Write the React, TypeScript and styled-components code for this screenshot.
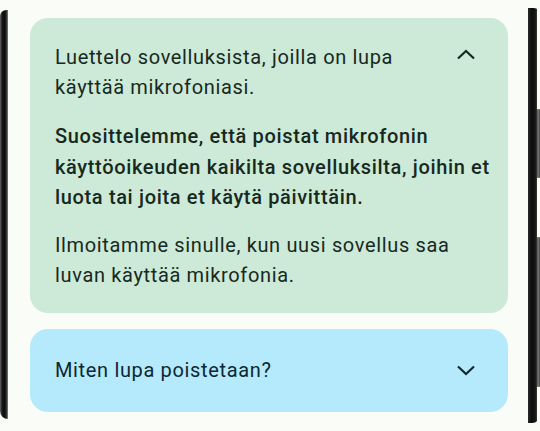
import styled, { createGlobalStyle } from 'styled-components';

const GlobalStyle = createGlobalStyle`
  html, body {
    margin: 0;
    padding: 0;
    background: #fafcf7;
  }
  body {
    font-family: Roboto, 'Noto Sans', 'Liberation Sans', sans-serif;
  }
`;

const Frame = styled.div`
  width: 540px;
  height: 431px;
  display: flex;
  overflow: hidden;
  background: #fafcf7;
`;

const LeftBezel = styled.div`
  width: 8px;
  margin: 10px 0 12px;
  border-radius: 8px 0 0 10px;
  background: linear-gradient(90deg, #6a6a6a 0%, #1a1a1a 25%, #0b0b0b 60%, #3c3c3c 85%, #8a8a8a 100%);
`;

const RightBezel = styled.div`
  width: 12px;
  margin: 8px 0 8px;
  display: flex;
  flex-direction: column;
  align-items: flex-end;
  border-radius: 0 6px 8px 0;
  background: linear-gradient(90deg, #2a2a2a 0%, #0c0c0c 30%, #151515 60%, #3a3a3a 75%, transparent 76%);
`;

const SideButton = styled.div<{ $top: number; $height: number }>`
  width: 3px;
  margin-top: ${(p) => p.$top}px;
  height: ${(p) => p.$height}px;
  border-radius: 1px;
  background: linear-gradient(90deg, #555 0%, #777 60%, #3a3a3a 100%);
`;

const Screen = styled.div`
  flex: 1;
  display: flex;
  flex-direction: column;
  gap: 16px;
  padding: 18px 20px 0 22px;
`;

const Card = styled.div<{ $tone: 'green' | 'blue' }>`
  border-radius: 18px;
  background: ${(p) => (p.$tone === 'green' ? '#cde9d7' : '#b5eafc')};
  color: ${(p) => (p.$tone === 'green' ? '#17291e' : '#0e2731')};
  padding: ${(p) => (p.$tone === 'green' ? '24px 8px 22px 25px' : '26px 8px 27px 25px')};
`;

const Header = styled.div<{ $open?: boolean }>`
  display: flex;
  align-items: ${(p) => (p.$open ? 'flex-start' : 'center')};
  justify-content: space-between;
  gap: 20px;
  padding-right: 18px;
`;

const Title = styled.div`
  font-size: 20px;
  line-height: 30px;
  letter-spacing: 0.65px;
`;

const Chevron = styled.svg<{ $open?: boolean }>`
  flex: none;
  width: 24px;
  height: 24px;
  margin-top: ${(p) => (p.$open ? 1 : 0)}px;
  margin-right: 4px;
`;

const Body = styled.div`
  display: flex;
  flex-direction: column;
  gap: 17px;
  margin-top: 19px;
`;

const Para = styled.p<{ $strong?: boolean }>`
  margin: 0;
  font-size: 20px;
  line-height: 30.5px;
  letter-spacing: 0.65px;
  font-weight: ${(p) => (p.$strong ? 500 : 400)};
`;

const ChevronIcon = ({ up }: { up?: boolean }) => (
  <Chevron $open={up} viewBox="0 0 24 24" fill="none">
    <polyline
      points={up ? '4,15.5 12,8 20,15.5' : '4,8.5 12,16 20,8.5'}
      stroke="currentColor"
      strokeWidth="2.2"
    />
  </Chevron>
);

export default function App() {
  return (
    <>
      <GlobalStyle />
      <Frame>
        <LeftBezel />
        <Screen>
          <Card $tone="green">
            <Header $open>
              <Title>Luettelo sovelluksista, joilla on lupa käyttää mikrofoniasi.</Title>
              <ChevronIcon up />
            </Header>
            <Body>
              <Para $strong>
                Suosittelemme, että poistat mikrofonin käyttöoikeuden kaikilta sovelluksilta, joihin et
                luota tai joita et käytä päivittäin.
              </Para>
              <Para>Ilmoitamme sinulle, kun uusi sovellus saa luvan käyttää mikrofonia.</Para>
            </Body>
          </Card>
          <Card $tone="blue">
            <Header>
              <Title>Miten lupa poistetaan?</Title>
              <ChevronIcon />
            </Header>
          </Card>
        </Screen>
        <RightBezel>
          <SideButton $top={101} $height={69} />
          <SideButton $top={59} $height={150} />
        </RightBezel>
      </Frame>
    </>
  );
}
